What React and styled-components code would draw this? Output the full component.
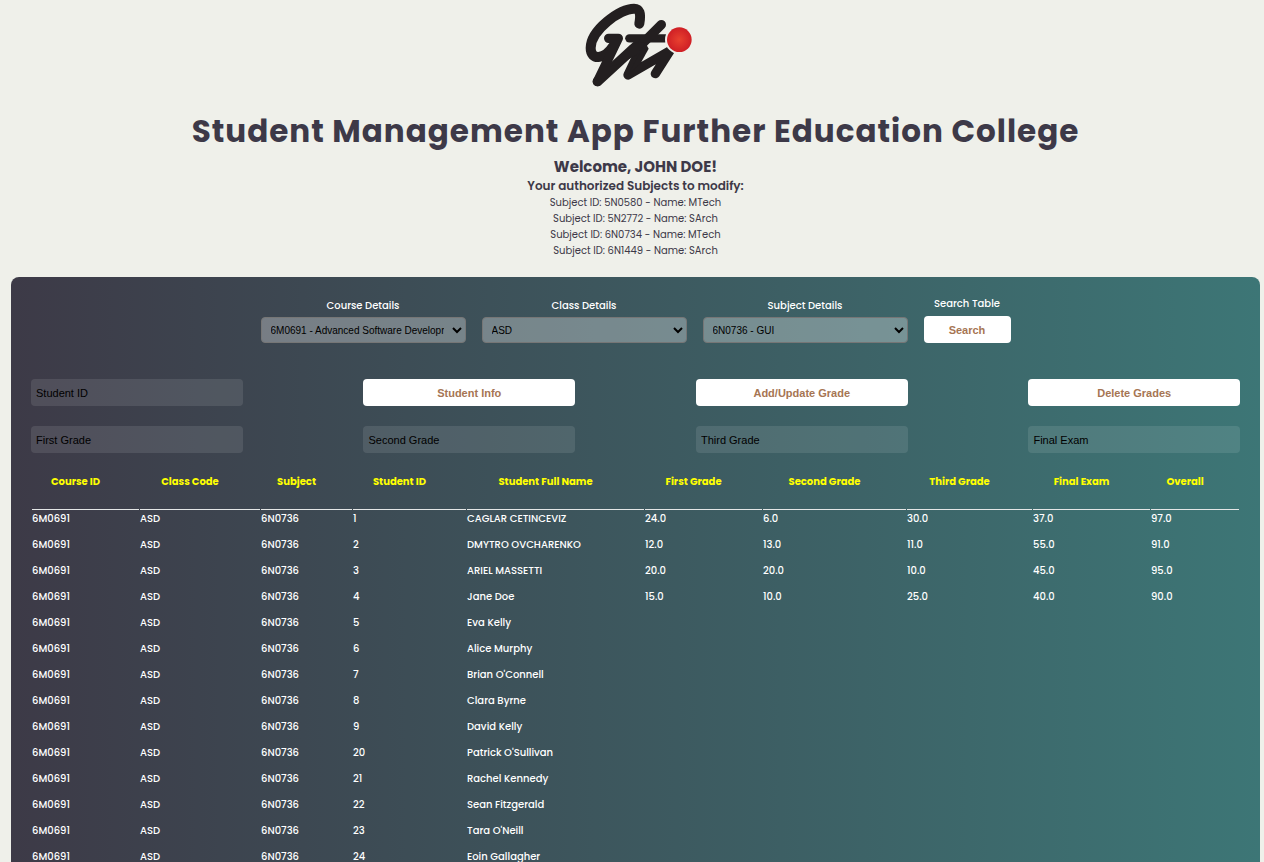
import React from "react";
import styled, { createGlobalStyle } from "styled-components";

const GlobalStyle = createGlobalStyle`
  * { box-sizing: border-box; }
  html { scrollbar-width: none; }
  body {
    margin: 0;
    background: #eff0ea;
    color: #3d3948;
    font-family: Poppins, Inter, "Liberation Sans", sans-serif;
    font-size: 10px;
  }
`;

const Page = styled.div`
  display: flex;
  flex-direction: column;
  min-height: 100vh;
  padding: 0 4px 0 11px;
`;

const Header = styled.header`
  display: flex;
  flex-direction: column;
  align-items: center;
  text-align: center;
  padding-bottom: 18px;
`;

const Logo = styled.svg`
  display: block;
  width: 113px;
  height: 90px;
`;

const Title = styled.h1`
  margin: 16px 0 0;
  font-size: 31px;
  line-height: 50px;
  font-weight: 700;
  letter-spacing: 1px;
`;

const Welcome = styled.h2`
  margin: 0;
  font-size: 15px;
  line-height: 22px;
  font-weight: 700;
`;

const Subtitle = styled.h3`
  margin: 0;
  font-size: 12px;
  line-height: 16px;
  font-weight: 600;
`;

const SubjectList = styled.ul`
  margin: 1px 0 0;
  padding: 0;
  list-style: none;
  font-size: 10px;
  font-weight: 400;
  line-height: 16px;
`;

const Panel = styled.main`
  flex: 1;
  padding: 19px 20px 20px;
  border-radius: 8px;
  background: linear-gradient(90deg, #3d3a47, #3d7676);
  color: #fff;
`;

const SearchBar = styled.form`
  display: flex;
  justify-content: center;
  align-items: flex-end;
  gap: 16px;
`;

const Field = styled.div`
  display: flex;
  flex-direction: column;
  align-items: center;
  gap: ${(p) => (p.$tight ? "5px" : "4px")};
  width: ${(p) => p.$width};
  font-weight: 500;
  line-height: 15px;
`;

const Select = styled.select`
  width: 100%;
  height: 26px;
  padding: 0 5px;
  border: 1px solid #767676;
  border-radius: 4px;
  background: rgba(255, 255, 255, 0.3);
  color: #000;
  font-family: "Liberation Sans", Arial, sans-serif;
  font-size: 10px;
`;

const Button = styled.button`
  width: 100%;
  height: 27px;
  padding: 0;
  border: 0;
  border-radius: 4px;
  background: #fff;
  color: #a67553;
  font-family: "Liberation Sans", Arial, sans-serif;
  font-size: 11px;
  font-weight: 700;
`;

const GradeForm = styled.form`
  display: grid;
  grid-template-columns: repeat(4, 1fr);
  gap: 20px 10%;
  margin: 36px 0 20px;
`;

const Input = styled.input`
  width: 100%;
  height: 27px;
  padding: 1px 5px 0;
  border: 0;
  border-radius: 4px;
  background: rgba(255, 255, 255, 0.1);
  color: #000;
  font-family: "Liberation Sans", Arial, sans-serif;
  font-size: 11px;
  &::placeholder { color: #000; opacity: 1; }
`;

const Table = styled.table`
  width: 100%;
  table-layout: fixed;
  border-spacing: 1px;
  line-height: 15px;
`;

const Col = styled.col`
  width: ${(p) => p.$width}px;
`;

const Th = styled.th`
  padding: 0 20px 20px 0;
  border-bottom: 1px solid #e4e6e6;
  color: #ff0;
  font-weight: 700;
  text-align: center;
`;

const Td = styled.td`
  padding: 0 0 10px;
  font-weight: 500;
  white-space: nowrap;
`;

const subjects = [
  ["5N0580", "MTech"],
  ["5N2772", "SArch"],
  ["6N0734", "MTech"],
  ["6N1449", "SArch"],
];

const filters = [
  ["course", "Course Details", "6M0691 - Advanced Software Development"],
  ["class", "Class Details", "ASD"],
  ["subject", "Subject Details", "6N0736 - GUI"],
];

const columns = [
  ["Course ID", 107],
  ["Class Code", 120],
  ["Subject", 91],
  ["Student ID", 113],
  ["Student Full Name", 177],
  ["First Grade", 117],
  ["Second Grade", 143],
  ["Third Grade", 125],
  ["Final Exam", 117],
  ["Overall", 88],
];

const students = [
  ["1", "CAGLAR CETINCEVIZ", "24.0", "6.0", "30.0", "37.0", "97.0"],
  ["2", "DMYTRO OVCHARENKO", "12.0", "13.0", "11.0", "55.0", "91.0"],
  ["3", "ARIEL MASSETTI", "20.0", "20.0", "10.0", "45.0", "95.0"],
  ["4", "Jane Doe", "15.0", "10.0", "25.0", "40.0", "90.0"],
  ["5", "Eva Kelly"],
  ["6", "Alice Murphy"],
  ["7", "Brian O'Connell"],
  ["8", "Clara Byrne"],
  ["9", "David Kelly"],
  ["20", "Patrick O'Sullivan"],
  ["21", "Rachel Kennedy"],
  ["22", "Sean Fitzgerald"],
  ["23", "Tara O'Neill"],
  ["24", "Eoin Gallagher"],
];

function GtiLogo() {
  return (
    <Logo viewBox="27 0 339 270" role="img" aria-label="GTI">
      <defs>
        <radialGradient id="dot">
          <stop offset="0" stopColor="#e8412f" />
          <stop offset="1" stopColor="#cf1f25" />
        </radialGradient>
      </defs>
      <g fill="none" stroke="#231f20" strokeWidth="28" strokeLinecap="round" strokeLinejoin="round">
        <path strokeWidth="30" d="M208 71 C214 38 208 26 192 26 C150 26 62 90 62 144 C62 182 102 180 130 138" />
        <path d="M116 115 H145 L82 245" />
        <path strokeWidth="30" d="M83 244 L190 146 L220 120" />
        <path strokeWidth="25" d="M178 115 H286" />
        <path d="M274 74 L220 128 L174 225 L300 152 L256 221" />
      </g>
      <path d="M118 200 L192 130 L224 128 L200 164 L150 192 Z" fill="#231f20" />
      <path d="M174 225 L226 128 L236 146 L212 190 Z" fill="#231f20" />
      <circle cx="328" cy="119" r="43" fill="#eff0ea" />
      <circle cx="328" cy="119" r="37" fill="url(#dot)" />
    </Logo>
  );
}

export default function App() {
  return (
    <>
      <GlobalStyle />
      <Page>
        <Header>
          <GtiLogo />
          <Title>Student Management App Further Education College</Title>
          <Welcome>Welcome, JOHN DOE!</Welcome>
          <Subtitle>Your authorized Subjects to modify:</Subtitle>
          <SubjectList>
            {subjects.map(([id, name]) => (
              <li key={id}>{`Subject ID: ${id} - Name: ${name}`}</li>
            ))}
          </SubjectList>
        </Header>
        <Panel>
          <SearchBar onSubmit={(e) => e.preventDefault()}>
            {filters.map(([id, label, value]) => (
              <Field key={id} $width="205px">
                <label htmlFor={id}>{label}</label>
                <Select id={id}>
                  <option>{value}</option>
                </Select>
              </Field>
            ))}
            <Field $width="87px" $tight>
              <label htmlFor="search">Search Table</label>
              <Button id="search" type="submit">Search</Button>
            </Field>
          </SearchBar>
          <GradeForm onSubmit={(e) => e.preventDefault()}>
            <Input aria-label="Student ID" placeholder="Student ID" />
            <Button type="button">Student Info</Button>
            <Button type="button">Add/Update Grade</Button>
            <Button type="button">Delete Grades</Button>
            <Input aria-label="First Grade" placeholder="First Grade" />
            <Input aria-label="Second Grade" placeholder="Second Grade" />
            <Input aria-label="Third Grade" placeholder="Third Grade" />
            <Input aria-label="Final Exam" placeholder="Final Exam" />
          </GradeForm>
          <Table>
            <colgroup>
              {columns.map(([name, width]) => (
                <Col key={name} $width={width} />
              ))}
            </colgroup>
            <thead>
              <tr>
                {columns.map(([name]) => (
                  <Th key={name} scope="col">{name}</Th>
                ))}
              </tr>
            </thead>
            <tbody>
              {students.map(([id, name, ...grades]) => (
                <tr key={id}>
                  <Td>6M0691</Td>
                  <Td>ASD</Td>
                  <Td>6N0736</Td>
                  <Td>{id}</Td>
                  <Td>{name}</Td>
                  {[0, 1, 2, 3, 4].map((i) => (
                    <Td key={i}>{grades[i]}</Td>
                  ))}
                </tr>
              ))}
            </tbody>
          </Table>
        </Panel>
      </Page>
    </>
  );
}
